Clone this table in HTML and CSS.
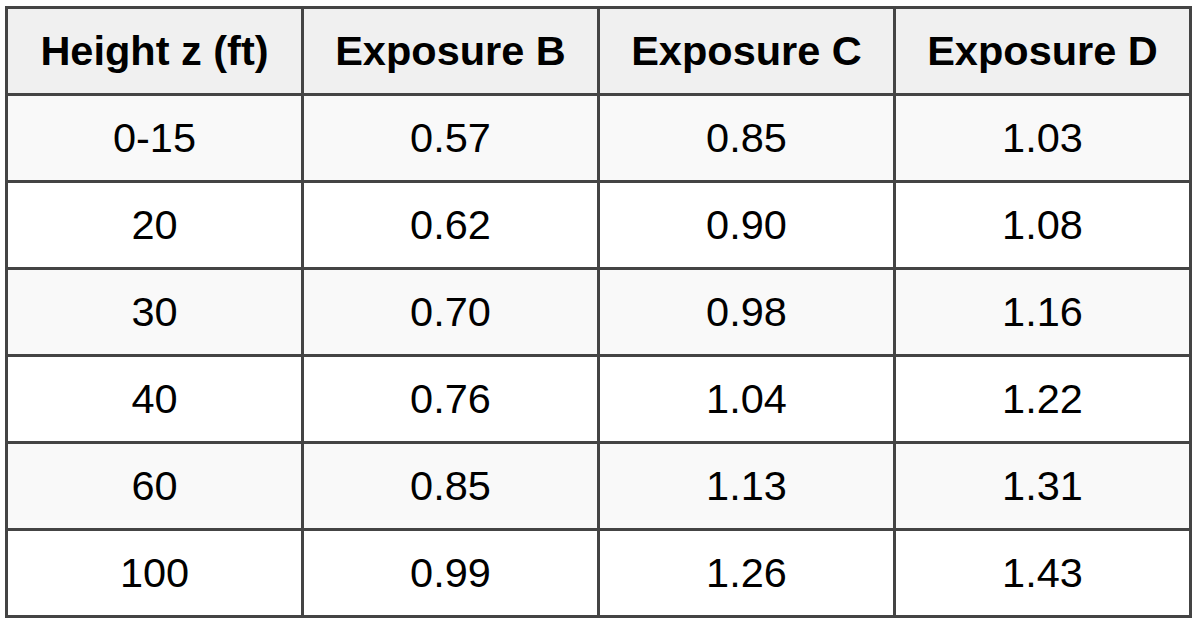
FILE: index.html
```html
<!DOCTYPE html>
<html>
<head>
<meta charset="utf-8">
<link rel="stylesheet" href="styles.css">
</head>
<body>
<table class="exp">
  <thead>
    <tr><th>Height z (ft)</th><th>Exposure B</th><th>Exposure C</th><th>Exposure D</th></tr>
  </thead>
  <tbody>
    <tr><td>0-15</td><td>0.57</td><td>0.85</td><td>1.03</td></tr>
    <tr><td>20</td><td>0.62</td><td>0.90</td><td>1.08</td></tr>
    <tr><td>30</td><td>0.70</td><td>0.98</td><td>1.16</td></tr>
    <tr><td>40</td><td>0.76</td><td>1.04</td><td>1.22</td></tr>
    <tr><td>60</td><td>0.85</td><td>1.13</td><td>1.31</td></tr>
    <tr><td>100</td><td>0.99</td><td>1.26</td><td>1.43</td></tr>
  </tbody>
</table>
</body>
</html>
```

FILE: styles.css
```css
html, body {
  margin: 0;
  background: #ffffff;
}
body {
  padding: 6px 5px;
  font-family: "Liberation Sans", Arial, sans-serif;
  color: #000;
}
.exp {
  border-collapse: collapse;
  table-layout: fixed;
  width: 1187px;
  font-size: 41.5px;
}
.exp th, .exp td {
  border: 3px solid #444444;
  height: 84px;
  padding: 0;
  text-align: center;
  vertical-align: middle;
}
.exp th {
  background: #f0f0f0;
  font-weight: bold;
}
.exp tbody tr:nth-child(odd) td {
  background: #f9f9f9;
}
.exp tbody tr:nth-child(even) td {
  background: #ffffff;
}
```
